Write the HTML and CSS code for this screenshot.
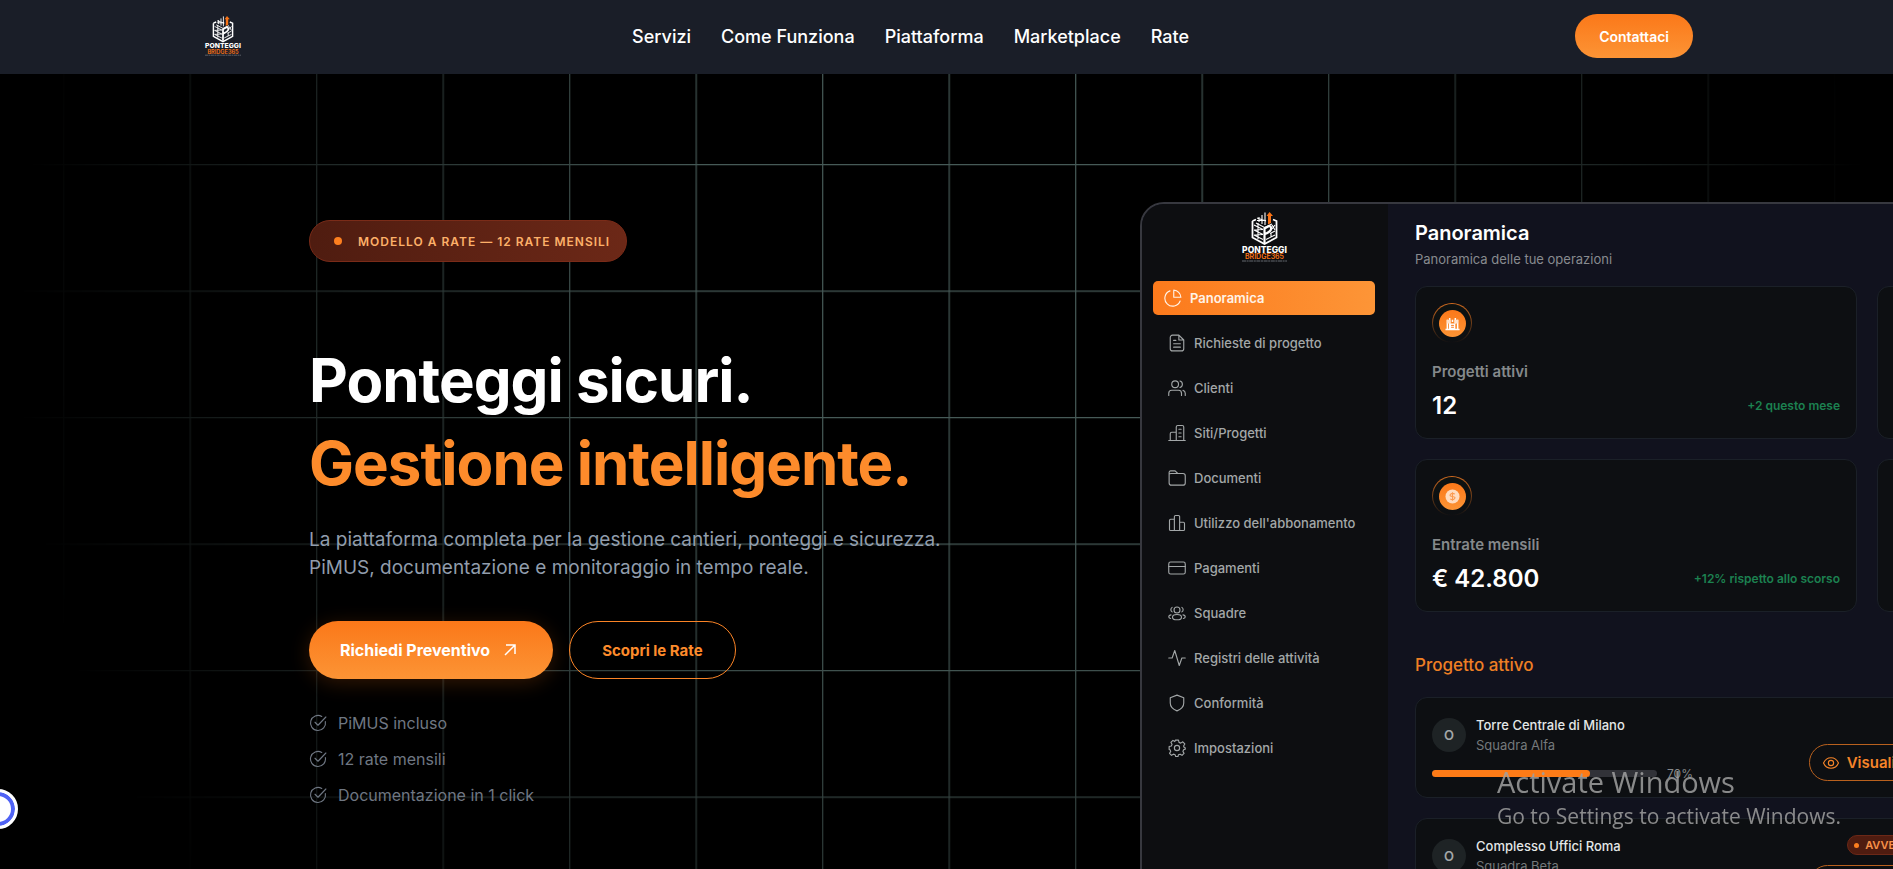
FILE: index.html
```html
<!DOCTYPE html>
<html lang="it">

<head>
    <meta charset="utf-8">
    <meta name="viewport" content="width=device-width, initial-scale=1">
    <title>Ponteggi Bridge365</title>
    <link rel="stylesheet" href="styles.css">
</head>

<body>
    <!-- logo -->
    <svg class="sprite" aria-hidden="true">
        <symbol id="logo" viewBox="0 0 47 50">
            <path d="M11.5 9 L15 7.5 M11.5 9 V25.5 L23.5 32 L35.5 25.5 V9 L32 7.5" fill="none" stroke="#fff" stroke-width="1.8" />
            <path d="M13 13 L22 17.500 M13 18 L22 22.500 M13 23 L22 27.500 M13 18 L22 17.500 M13 23 L22 22.500 M17 11 V27" fill="none" stroke="#fff" stroke-width="1.1" />
            <path d="M25 27.500 L34 23 M29 21.500 L34 19 M31 17 L34 13 M31 13 L34 18 M30 25 V21" fill="none" stroke="#fff" stroke-width="1.1" />
            <path d="M23.500 31 V16.500 L28 14 Q30.500 14 30 17.500 Q29 20 24 22" fill="none" stroke="#fff" stroke-width="2.2" />
            <path d="M15 11 L23.500 15.500 L31 12 M16 8.500 H25 M18 5 V10 M21 3 V12 M24 0.500 V13 M16 6 L25 9" fill="none" stroke="#fff" stroke-width="1.1" />
            <path d="M28.500 0 L32 4 H30 V11 L27 12.500 V4 H25.500 Z" fill="#f97316" />
            <text x="23.500" y="40.500" font-size="8.500" font-weight="800" fill="#fff" text-anchor="middle">PONTEGGI</text>
            <text x="23.500" y="47" font-size="7" font-weight="600" fill="#f97316" text-anchor="middle">BRIDGE365</text>
            <path d="M1 49 H46" stroke="#8b8f98" stroke-width="0.7" stroke-dasharray="4 0.6 2 0.6" />
        </symbol>
        <symbol id="check" viewBox="0 0 24 24">
            <path d="M21.800 10A10 10 0 1 1 17 3.300" />
            <path d="M8 11l4 4L22.500 4" />
        </symbol>
        <symbol id="eye" viewBox="0 0 24 24">
            <path d="M2 12c2-4.500 5.500-7 10-7s8 2.500 10 7c-2 4.500-5.500 7-10 7S4 16.500 2 12z" />
            <circle cx="12" cy="12" r="3.500" />
        </symbol>
    </svg>

    <header class="header">
        <a class="brand" href="#" aria-label="Ponteggi Bridge365">
            <svg class="brand-logo"><use href="#logo" /></svg>
        </a>
        <nav class="nav">
            <a href="#">Servizi</a>
            <a href="#">Come Funziona</a>
            <a href="#">Piattaforma</a>
            <a href="#">Marketplace</a>
            <a href="#">Rate</a>
        </nav>
        <button class="btn btn-contact" type="button">Contattaci</button>
    </header>

    <main class="hero">
        <!-- griglia di sfondo -->
        <svg class="grid" aria-hidden="true">
            <defs>
                <pattern id="cell" x="63" y="90" width="126.500" height="126.500" patternUnits="userSpaceOnUse">
                    <path d="M0.700 0V126.500M0 0.700H126.500" fill="none" stroke="#465a57" stroke-width="1.200" />
                </pattern>
            </defs>
            <rect width="100%" height="100%" fill="url(#cell)" />
        </svg>

        <div class="hero-inner">
            <section class="copy">
                <p class="tag"><span class="dot"></span>MODELLO A RATE — 12 RATE MENSILI</p>
                <h1>Ponteggi sicuri.<br><span>Gestione intelligente.</span></h1>
                <p class="lead">La piattaforma completa per la gestione cantieri, ponteggi e sicurezza.<br>PiMUS, documentazione e monitoraggio in tempo reale.</p>
                <div class="actions">
                    <button class="btn btn-primary" type="button">Richiedi Preventivo
                        <svg class="arrow" viewBox="0 0 12 12"><path d="M1 11L10.500 1.500M2 1H11V10" /></svg>
                    </button>
                    <button class="btn btn-outline" type="button">Scopri le Rate</button>
                </div>
                <ul class="points">
                    <li><svg class="icon"><use href="#check" /></svg>PiMUS incluso</li>
                    <li><svg class="icon"><use href="#check" /></svg>12 rate mensili</li>
                    <li><svg class="icon"><use href="#check" /></svg>Documentazione in 1 click</li>
                </ul>
            </section>

            <!-- anteprima dashboard -->
            <section class="dash">
                <aside class="side">
                    <svg class="side-logo"><use href="#logo" /></svg>
                    <ul class="menu">
                        <li><a class="current" href="#"><svg class="icon" viewBox="0 0 24 24"><path d="M13 1.500A10 10 0 0 1 22.500 11H13zM8 2.500A10.500 10.500 0 1 0 21.500 16" /></svg>Panoramica</a></li>
                        <li><a href="#"><svg class="icon" viewBox="0 0 24 24"><path d="M14.500 1.500H6a3 3 0 0 0-3 3v15a3 3 0 0 0 3 3h12a3 3 0 0 0 3-3V8zM14.500 1.500V8H21M7.500 8.500h3M7.500 13h9M7.500 17.500h9" /></svg>Richieste di progetto</a></li>
                        <li><a href="#"><svg class="icon" viewBox="0 0 24 24"><circle cx="9.500" cy="7" r="4.500" /><path d="M1 22v-3a4 4 0 0 1 4-4h9a4 4 0 0 1 4 4v3M16 2.700a4.500 4.500 0 0 1 0 8.600M23 22v-3a4 4 0 0 0-3-3.800" /></svg>Clienti</a></li>
                        <li><a href="#"><svg class="icon" viewBox="0 0 24 24"><path d="M1 22h22M3 22V13a2 2 0 0 1 2-2h6M11 22V4a2 2 0 0 1 2-2h6a2 2 0 0 1 2 2v18M14.500 7h3M14.500 12h3M14.500 17h3" /></svg>Siti/Progetti</a></li>
                        <li><a href="#"><svg class="icon" viewBox="0 0 24 24"><path d="M1.500 7V4.500a2 2 0 0 1 2-2h6L13 6h7a3 3 0 0 1 3 3v9.500a3 3 0 0 1-3 3H4.500a3 3 0 0 1-3-3zM1.500 7q0-1 3-1H13" /></svg>Documenti</a></li>
                        <li><a href="#"><svg class="icon" viewBox="0 0 24 24"><path d="M8.500 22V3.500a1.500 1.500 0 0 1 1.500-1.500h4a1.500 1.500 0 0 1 1.500 1.500V22M8.500 7H3.500A1.500 1.500 0 0 0 2 8.500V20.500A1.500 1.500 0 0 0 3.500 22H20.500A1.500 1.500 0 0 0 22 20.500V12.500A1.500 1.500 0 0 0 20.500 11H15.500" /></svg>Utilizzo dell'abbonamento</a></li>
                        <li><a href="#"><svg class="icon" viewBox="0 0 24 24"><rect x="1" y="4" width="22" height="16" rx="2.500" /><path d="M1 10h22" /></svg>Pagamenti</a></li>
                        <li><a href="#"><svg class="icon" viewBox="0 0 24 24"><circle cx="12" cy="8" r="4" /><ellipse cx="12" cy="17.500" rx="6" ry="3.500" /><path d="M5.500 4.500a3.500 3.500 0 0 0 0 6M18.500 4.500a3.500 3.500 0 0 1 0 6M4 14.500q-3 .5-3 2.500t2.500 2.300M20 14.500q3 .5 3 2.500t-2.500 2.300" /></svg>Squadre</a></li>
                        <li><a href="#"><svg class="icon" viewBox="0 0 24 24"><path d="M1 12h4.500L9 2l6 20 3.500-10H23" /></svg>Registri delle attività</a></li>
                        <li><a href="#"><svg class="icon" viewBox="0 0 24 24"><path d="M12 1.500L21 5v7c0 5-4 8.500-9 10.500C7 20.500 3 17 3 12V5z" /></svg>Conformità</a></li>
                        <li><a href="#"><svg class="icon" viewBox="0 0 24 24"><circle cx="12" cy="12" r="3.500" /><path d="M10 1.500h4l.7 3 2.300 1 2.700-1.700 2.700 2.800L20.800 9.300l.8 2 1.400.4v1.800l-2.200.9-.9 2.200 1.500 2.600-2.700 2.600-2.600-1.600-2.200.9-.6 2.400h-3l-.8-2.500-2.200-.8-2.700 1.600-2.500-2.700 1.500-2.600-.9-2.200L1.500 14v-4l3-.7.900-2.200-1.600-2.700 2.800-2.600L9 3.400z" /></svg>Impostazioni</a></li>
                    </ul>
                </aside>

                <div class="panel">
                    <h2>Panoramica</h2>
                    <p class="sub">Panoramica delle tue operazioni</p>

                    <div class="stats">
                        <article class="stat">
                            <span class="ring"><span class="disc">
                                <svg viewBox="0 0 16 16"><path d="M0.500 14.500h15M2.500 14V4M5 14V2M11 8V2M13.500 14V4M8 6.500V4" stroke="#fff" stroke-width="1.600" /><path d="M2 4h4v4H2zM10 4h4v4h-4z" fill="#ffe3cc" /><path d="M5 8h6v6H5z" fill="#fff" /><path d="M6.500 10h3M6.500 12h3" stroke="#f97316" /></svg>
                            </span></span>
                            <h3>Progetti attivi</h3>
                            <div class="value"><strong>12</strong><em>+2 questo mese</em></div>
                        </article>
                        <article class="stat"></article>
                        <article class="stat">
                            <span class="ring"><span class="disc">
                                <svg viewBox="0 0 16 16"><circle cx="8" cy="8" r="7.500" fill="#ffdcc0" /><path d="M10.500 5.500q-2.500-1.800-4.500 0t2 2.500 2 2.500-4.500 0M8 3.500v9" fill="none" stroke="#fb9a50" stroke-width="1.200" /></svg>
                            </span></span>
                            <h3>Entrate mensili</h3>
                            <div class="value"><strong>€ 42.800</strong><em>+12% rispetto allo scorso</em></div>
                        </article>
                        <article class="stat"></article>
                    </div>

                    <div class="projects">
                        <div class="projects-head">
                            <h3>Progetto attivo</h3>
                            <a href="#">Vedi tutti</a>
                        </div>
                        <article class="project">
                            <div class="who">
                                <span class="avatar">O</span>
                                <div>
                                    <h4>Torre Centrale di Milano</h4>
                                    <p>Squadra Alfa</p>
                                </div>
                            </div>
                            <div class="progress">
                                <span class="bar"><span class="fill" style="width: 70%"></span></span>70%
                            </div>
                            <div class="project-side">
                                <button class="btn btn-view" type="button"><svg class="icon"><use href="#eye" /></svg>Visualizza</button>
                            </div>
                        </article>
                        <article class="project">
                            <div class="who">
                                <span class="avatar">O</span>
                                <div>
                                    <h4>Complesso Uffici Roma</h4>
                                    <p>Squadra Beta</p>
                                </div>
                            </div>
                            <div class="progress">
                                <span class="bar"><span class="fill" style="width: 45%"></span></span>45%
                            </div>
                            <div class="project-side">
                                <span class="state"><span class="state-dot"></span>AVVENUTO</span>
                                <button class="btn btn-view" type="button"><svg class="icon"><use href="#eye" /></svg>Visualizza</button>
                            </div>
                        </article>
                    </div>
                </div>
            </section>
        </div>
    </main>

    <button class="bubble" type="button" aria-label="Apri chat"></button>

    <div class="watermark">
        <p class="watermark-title">Activate Windows</p>
        <p>Go to Settings to activate Windows.</p>
    </div>
</body>

</html>
```
FILE: styles.css
```css
* {
    padding: 0;
    margin: 0;
    box-sizing: border-box;
}

ul {
    list-style: none;
}

a {
    text-decoration: none;
    color: inherit;
}

body {
    display: flex;
    flex-direction: column;
    height: 100vh;
    overflow: hidden;
    background-color: #000;
    color: #fff;
    font-family: Inter, "Liberation Sans", sans-serif;
}

.sprite {
    display: none;
}

.icon {
    flex: none;
    width: 18px;
    height: 18px;
    fill: none;
    stroke: currentColor;
    stroke-width: 1.5;
    stroke-linecap: round;
    stroke-linejoin: round;
}

.btn {
    border: none;
    border-radius: 30px;
    background: none;
    font-family: inherit;
    white-space: nowrap;
    cursor: pointer;
}

/* header */
.header {
    display: flex;
    flex: none;
    align-items: center;
    justify-content: space-between;
    height: 74px;
    padding: 0 200px 2px;
    background-color: #1a1e28;
}

.brand {
    display: flex;
    padding: 0 4px;
}

.brand-logo {
    width: 38px;
    height: 40px;
}

.nav {
    display: flex;
    gap: 30px;
    font-size: 18px;
    font-weight: 500;
}

.btn-contact {
    height: 44px;
    padding: 0 24px;
    background-image: linear-gradient(#fb7819, #fc9435);
    color: #fff;
    font-size: 14px;
    font-weight: 600;
}

/* hero */
.hero {
    position: relative;
    flex: 1;
    min-height: 0;
    overflow: hidden;
}

.grid {
    position: absolute;
    top: 0;
    left: 0;
    width: 100%;
    height: 100%;
    mask-image: radial-gradient(930px 980px at 50% 32%, #000 30%, transparent 100%);
}

.hero-inner {
    position: relative;
    display: grid;
    grid-template-columns: minmax(0, 1fr) 444px;
    align-items: start;
    max-width: 1275px;
    margin: 0 auto;
    padding-top: 128px;
}

.copy {
    display: flex;
    flex-direction: column;
    align-items: flex-start;
    padding-top: 18px;
}

.tag {
    display: flex;
    align-items: center;
    gap: 16px;
    height: 42px;
    padding: 0 16px 0 24px;
    border: 1px solid #7a2b18;
    border-radius: 21px;
    background-image: linear-gradient(90deg, #4f1c10, #6c2817);
    color: #fdb069;
    font-size: 12px;
    font-weight: 600;
    letter-spacing: 1px;
}

.dot {
    width: 8px;
    height: 8px;
    border-radius: 50%;
    background-color: #fd7f1f;
}

h1 {
    margin-top: 77px;
    font-size: 60px;
    font-weight: 700;
    line-height: 83px;
    letter-spacing: -1px;
}

h1 span {
    color: #fd8b2b;
}

.lead {
    margin-top: 21px;
    color: #919dac;
    font-size: 19px;
    line-height: 28px;
}

.actions {
    display: flex;
    gap: 16px;
    margin-top: 39px;
}

.btn-primary,
.btn-outline {
    display: flex;
    align-items: center;
    height: 58px;
    font-size: 16px;
    font-weight: 700;
}

.btn-primary {
    gap: 14px;
    padding: 0 37px 0 31px;
    background-image: linear-gradient(#fb7819, #fc9435);
    box-shadow: 0 4px 20px rgba(249, 115, 22, .2);
    color: #fff;
}

.arrow {
    width: 12px;
    height: 12px;
    fill: none;
    stroke: #fff;
    stroke-width: 1.5;
}

.btn-outline {
    padding: 0 32px;
    border: 1px solid #fb8426;
    color: #fd8b2b;
    font-size: 15px;
}

.points {
    display: grid;
    gap: 12px;
    margin-top: 32px;
    color: #6f7783;
    font-size: 16px;
    line-height: 24px;
}

.points li {
    display: flex;
    align-items: center;
    gap: 11px;
}

/* dashboard */
.dash {
    display: flex;
    width: 1200px;
    height: 900px;
    border: 2px solid #37383f;
    border-radius: 24px;
    background-color: #11121e;
    overflow: hidden;
}

.side {
    display: flex;
    flex: none;
    flex-direction: column;
    width: 246px;
    padding: 8px 13px 0 11px;
    background-color: #0d0e11;
}

.side-logo {
    align-self: center;
    width: 47px;
    height: 50px;
}

.menu {
    display: grid;
    gap: 11px;
    margin-top: 19px;
    color: #a3a7a8;
    font-size: 13px;
    font-weight: 500;
    white-space: nowrap;
}

.menu a {
    display: flex;
    align-items: center;
    gap: 8px;
    height: 34px;
    padding: 0 15px;
}

.menu .current {
    padding: 0 11px;
    border-radius: 5px;
    background-image: linear-gradient(90deg, #fc7a1c, #fd9537);
    color: #fff3e8;
    font-weight: 600;
}

.panel {
    flex: 1;
    padding: 15px 24px 0 27px;
}

h2 {
    font-size: 20px;
    font-weight: 600;
    line-height: 28px;
}

.sub {
    margin-top: 2px;
    color: #888b8f;
    font-size: 13px;
    line-height: 20px;
}

.stats {
    display: grid;
    grid-template-columns: 442px 442px;
    grid-auto-rows: 153px;
    gap: 20px;
    margin-top: 17px;
}

.stat,
.project {
    border: 1px solid #1b2028;
    border-radius: 12px;
    background-color: #0d0f12;
}

.stat {
    padding: 16px;
}

.ring {
    display: flex;
    align-items: center;
    justify-content: center;
    width: 40px;
    height: 40px;
    border: 1px solid transparent;
    border-radius: 50%;
    background: linear-gradient(#0d1211, #0d0f12) padding-box, linear-gradient(#d36c1f, #0d0f12) border-box;
}

.disc {
    display: flex;
    align-items: center;
    justify-content: center;
    width: 27px;
    height: 27px;
    border-radius: 50%;
    background-image: linear-gradient(#fb7819, #fc9435);
}

.disc svg {
    width: 15px;
    height: 15px;
}

.stat h3 {
    margin-top: 19px;
    color: #85898b;
    font-size: 15px;
    font-weight: 600;
    line-height: 20px;
}

.value {
    display: flex;
    align-items: center;
    justify-content: space-between;
    margin-top: 8px;
    line-height: 32px;
}

.value strong {
    font-size: 24px;
    font-weight: 600;
}

.value em {
    color: #1c8150;
    font-size: 12px;
    font-style: normal;
    font-weight: 600;
}

.projects {
    display: grid;
    gap: 20px;
    width: 536px;
    margin-top: 41px;
}

.projects-head {
    display: flex;
    align-items: center;
    justify-content: space-between;
    color: #ee7f24;
    font-size: 13px;
    line-height: 24px;
}

.projects-head h3 {
    font-size: 17px;
    font-weight: 500;
}

.project {
    display: grid;
    grid-template-columns: 1fr auto;
    gap: 10px;
    min-height: 101px;
    padding: 16px;
}

.who {
    display: flex;
    align-items: center;
    gap: 10px;
    font-size: 13px;
    line-height: 20px;
}

.who h4 {
    color: #e4e7e7;
    font-size: 13px;
    font-weight: 500;
}

.who p {
    color: #74797b;
}

.avatar {
    display: flex;
    align-items: center;
    justify-content: center;
    width: 34px;
    height: 34px;
    border-radius: 50%;
    background-color: #1e2325;
    color: #a3a7a8;
    font-weight: 600;
}

.progress {
    display: flex;
    grid-row: 2;
    align-items: center;
    gap: 10px;
    color: #85898b;
    font-size: 12px;
}

.bar {
    width: 225px;
    height: 7px;
    border-radius: 4px;
    background-color: #313238;
}

.fill {
    display: block;
    height: 100%;
    border-radius: 4px;
    background-color: #fd7b17;
}

.project-side {
    display: flex;
    grid-row: 1 / 3;
    grid-column: 2;
    flex-direction: column;
    align-items: flex-end;
    justify-content: flex-end;
    gap: 10px;
}

.btn-view {
    display: flex;
    align-items: center;
    gap: 7px;
    height: 37px;
    padding: 0 12px;
    border: 1px solid #b9611e;
    color: #f58429;
    font-size: 15px;
    font-weight: 600;
}

.state {
    display: flex;
    align-items: center;
    gap: 6px;
    height: 20px;
    padding: 0 6px;
    border: 1px solid #6c2817;
    border-radius: 10px;
    background-color: #4f1c10;
    color: #f8924a;
    font-size: 11px;
    font-weight: 600;
}

.state-dot {
    width: 5px;
    height: 5px;
    border-radius: 50%;
    background-color: #fd7f1f;
}

/* overlay */
.bubble {
    position: fixed;
    bottom: 40px;
    left: -22px;
    width: 40px;
    height: 40px;
    border: 3px solid #fff;
    border-radius: 50%;
    background-color: #fff;
    box-shadow: inset 0 0 0 4px #4f62f5;
}

.watermark {
    position: fixed;
    right: 52px;
    bottom: 39px;
    color: rgba(160, 160, 160, .85);
    font-family: "Open Sans", "Noto Sans", sans-serif;
    font-size: 21px;
    line-height: 28px;
    pointer-events: none;
}

.watermark-title {
    font-size: 29px;
    line-height: 40px;
}
```
